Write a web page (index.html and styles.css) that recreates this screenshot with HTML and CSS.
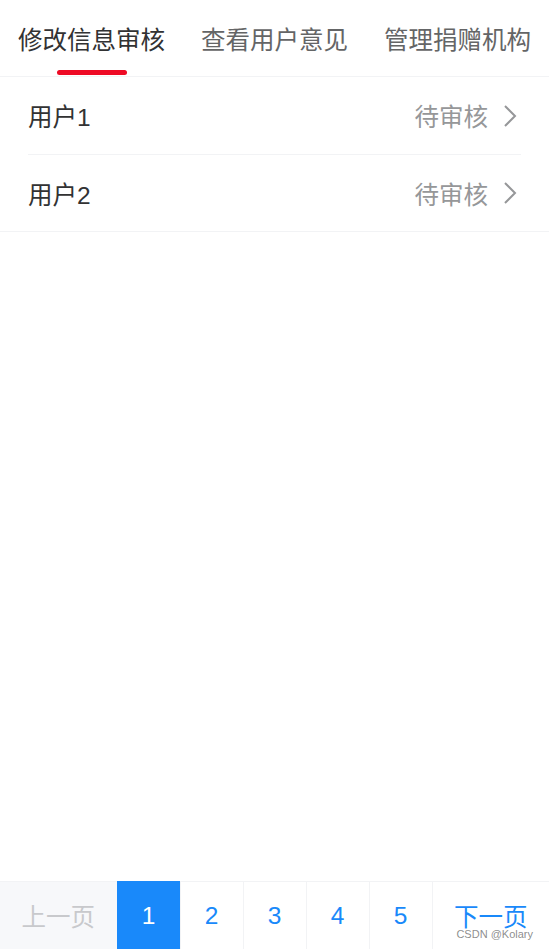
FILE: index.html
```html
<!DOCTYPE html>
<html>

<head>
    <title>审核管理</title>
    <link rel="stylesheet" href="styles.css">
</head>

<body>
    <div class="tabs">
        <div class="tab active">修改信息审核<span class="line"></span></div>
        <div class="tab">查看用户意见</div>
        <div class="tab">管理捐赠机构</div>
    </div>

    <div class="cell-group">
        <div class="cell">
            <span class="cell-title">用户1</span>
            <span class="cell-value">待审核</span>
            <svg class="arrow" width="18" height="28" viewBox="0 0 18 28">
                <polyline points="3,4 13,14 3,24" fill="none" stroke="#969799" stroke-width="2" />
            </svg>
        </div>
        <div class="cell">
            <span class="cell-title">用户2</span>
            <span class="cell-value">待审核</span>
            <svg class="arrow" width="18" height="28" viewBox="0 0 18 28">
                <polyline points="3,4 13,14 3,24" fill="none" stroke="#969799" stroke-width="2" />
            </svg>
        </div>
    </div>

    <div class="pagination">
        <div class="page-item prev disabled">上一页</div>
        <div class="page-item num active">1</div>
        <div class="page-item num">2</div>
        <div class="page-item num">3</div>
        <div class="page-item num">4</div>
        <div class="page-item num">5</div>
        <div class="page-item next">下一页</div>
        <span class="watermark">CSDN @Kolary</span>
    </div>
</body>

</html>
```

FILE: styles.css
```css
html, body {
    margin: 0;
    padding: 0;
}

body {
    font-family: "Liberation Sans", "Noto Sans CJK SC", sans-serif;
    background-color: #fff;
    display: flex;
    flex-direction: column;
    min-height: 100vh;
}

.tabs {
    display: flex;
    height: 77px;
    border-bottom: 1px solid #f2f3f5;
    box-sizing: border-box;
}

.tab {
    flex: 1;
    position: relative;
    display: flex;
    align-items: center;
    justify-content: center;
    font-size: 24.5px;
    color: #646566;
}

.tab.active {
    color: #323233;
}

.tab .line {
    position: absolute;
    bottom: 1px;
    left: 50%;
    width: 70px;
    height: 5px;
    margin-left: -35px;
    border-radius: 5px;
    background-color: #ee0a24;
}

.cell-group {
    border-bottom: 1px solid #f2f3f5;
}

.cell {
    display: flex;
    align-items: center;
    height: 77px;
    margin: 0 28px;
    font-size: 24.5px;
    box-sizing: border-box;
}

.cell + .cell {
    border-top: 1px solid #f2f3f5;
}

.cell-title {
    flex: 1;
    color: #323233;
}

.cell-value {
    color: #969799;
}

.arrow {
    margin-left: 14px;
    margin-right: 1px;
}

.pagination {
    margin-top: auto;
    position: relative;
    display: flex;
    height: 68px;
    font-size: 24.5px;
}

.page-item {
    display: flex;
    align-items: center;
    justify-content: center;
    color: #1989fa;
    background-color: #fff;
    border-top: 1px solid #f2f3f5;
    border-left: 1px solid #f2f3f5;
    box-sizing: border-box;
}

.page-item.prev,
.page-item.next {
    flex: 1;
}

.page-item.num {
    width: 63px;
}

.page-item.active {
    color: #fff;
    background-color: #1989fa;
    border-color: #1989fa;
}

.page-item.disabled {
    color: #c8c9cc;
    background-color: #f7f8fa;
    border-left: none;
}

.watermark {
    position: absolute;
    right: 16px;
    bottom: 9px;
    font-size: 11px;
    color: rgba(120, 120, 120, 0.85);
}
```
